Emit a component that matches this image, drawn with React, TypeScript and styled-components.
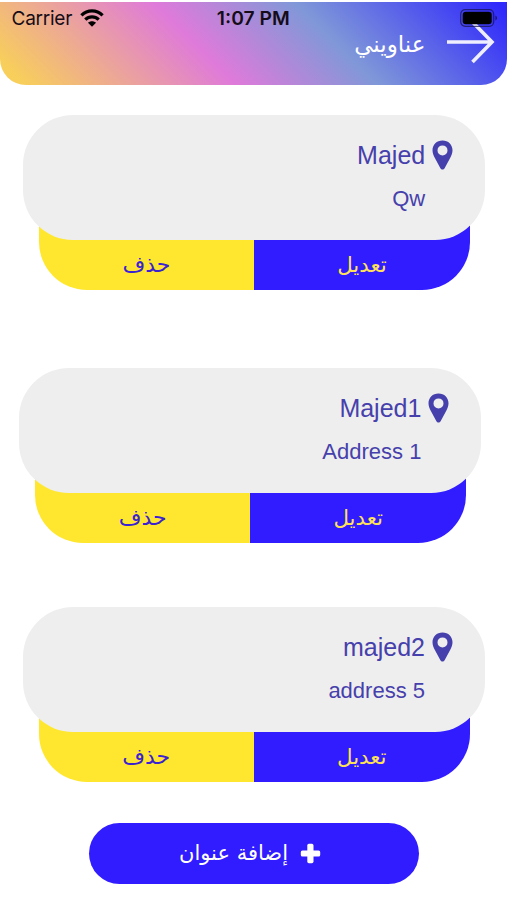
import React from "react";
import styled, { createGlobalStyle } from "styled-components";

const GlobalStyle = createGlobalStyle`
  * { box-sizing: border-box; }
  body { margin: 0; background: #fff; }
`;

const Screen = styled.main`
  width: 507px;
  height: 900px;
  overflow: hidden;
  background: #fff;
  font-family: "Liberation Sans", "DejaVu Sans", sans-serif;
`;

const Header = styled.header`
  height: 83px;
  margin-top: 1.5px;
  border-radius: 0 0 26px 26px;
  background: linear-gradient(45deg, #f8cf5a 4%, #df7ada 40%, #8098d8 64%, #3029fb 98%);
`;

const StatusBar = styled.div`
  position: relative;
  z-index: 1;
  display: grid;
  grid-template-columns: 1fr auto 1fr;
  align-items: center;
  height: 33px;
  padding: 0 9px 0 11.5px;
  font-family: Inter, sans-serif;
  color: #150c18;
`;

const Carrier = styled.div`
  display: flex;
  align-items: center;
  gap: 7.5px;
  font-size: 19px;
  letter-spacing: -0.25px;
`;

const Time = styled.span`
  margin-right: 3px;
  font-weight: 600;
  font-size: 19.3px;
`;

const Battery = styled.svg`
  justify-self: end;
  margin-top: -1px;
`;

const TitleRow = styled.div`
  direction: rtl;
  display: flex;
  align-items: center;
  gap: 20px;
  height: 44px;
  margin-top: -14.5px;
  padding-right: 12.5px;
`;

const Title = styled.h1`
  margin: 3px 0 0;
  font-family: "DejaVu Sans", sans-serif;
  font-size: 23px;
  font-weight: 400;
  color: #fff;
`;

const List = styled.section`
  display: flex;
  flex-direction: column;
  padding-top: 30.1px;
`;

const Entry = styled.article<{ $left: number; $gap: number }>`
  width: 462px;
  height: 175.5px;
  margin-left: ${(p) => p.$left}px;
  margin-bottom: ${(p) => p.$gap}px;
`;

const Card = styled.div`
  position: relative;
  z-index: 1;
  direction: rtl;
  display: grid;
  grid-template-columns: 21px 1fr;
  column-gap: 7px;
  align-content: start;
  height: 125px;
  padding: 25px 32px 0 0;
  border-radius: 50px;
  background: #eee;
  color: #4640ac;
`;

const Name = styled.div`
  height: 32px;
  font-size: 25px;
  line-height: 31px;
`;

const Address = styled.div`
  grid-column: 2;
  margin-top: 11px;
  font-size: 22px;
  line-height: 31px;
`;

const Actions = styled.div`
  display: flex;
  height: 95.5px;
  width: 431px;
  margin: -45.5px 0 0 15.5px;
  border-radius: 0 0 48px 48px;
  overflow: hidden;
`;

const Action = styled.button<{ $primary?: boolean }>`
  flex: 1;
  border: 0;
  padding: 45.5px 0 0;
  font-family: "DejaVu Sans", sans-serif;
  font-size: ${(p) => (p.$primary ? 21.3 : 22)}px;
  line-height: 50px;
  background: ${(p) => (p.$primary ? "#301cff" : "#ffe730")};
  color: ${(p) => (p.$primary ? "#ffe257" : "#3a22d0")};
`;

const AddButton = styled.button`
  direction: rtl;
  display: flex;
  align-items: center;
  gap: 12px;
  width: 330px;
  height: 61px;
  margin-left: 89px;
  padding: 0 98px 0 0;
  border: 0;
  border-radius: 31px;
  background: #301cff;
  color: #fff;
  font-family: "DejaVu Sans", sans-serif;
  font-size: 21px;
  white-space: nowrap;
`;

const entries = [
  { name: "Majed", address: "Qw", left: 23.2, gap: 77.8 },
  { name: "Majed1", address: "Address 1", left: 19.4, gap: 63.9 },
  { name: "majed2", address: "address 5", left: 23, gap: 39.8 },
];

const WifiIcon = () => (
  <svg width="24" height="18" viewBox="0 0 24 18" fill="none" stroke="#000" strokeWidth="3.2">
    <path d="M1.4 6.4C7.5.4 16.5.4 22.6 6.4" />
    <path d="M5.3 10.6c3.8-3.7 9.6-3.7 13.4 0" />
    <path d="M8 13.8c2.3-2 5.7-2 8 0l-4 4z" fill="#000" stroke="none" />
  </svg>
);

const PinIcon = () => (
  <svg width="21" height="30" viewBox="0 0 21 30">
    <path
      fill="#4640ac"
      fillRule="evenodd"
      d="M10.5.5C4.7.5.5 4.7.5 10.3c0 3 1 5 2.5 8l5.4 10c.9 1.6 3.3 1.6 4.2 0l5.4-10c1.5-3 2.5-5 2.5-8 0-5.6-4.2-9.800-10-9.800zm0 4.900a5 5 0 1 1 0 10 5 5 0 0 1 0-10z"
    />
  </svg>
);

export default function App() {
  return (
    <>
      <GlobalStyle />
      <Screen>
        <Header>
          <StatusBar>
            <Carrier>
              Carrier
              <WifiIcon />
            </Carrier>
            <Time>1:07 PM</Time>
            <Battery width="38" height="18" viewBox="0 0 38 18">
              <rect x=".7" y=".7" width="33" height="16.6" rx="4.5" fill="none" stroke="#17134f" strokeOpacity=".75" strokeWidth="1.2" />
              <rect x="2.7" y="2.7" width="29" height="12.6" rx="3" fill="#000" />
              <path d="M35.5 6.5c1.8.8 1.8 4.2 0 5z" fill="#17134f" />
            </Battery>
          </StatusBar>
          <TitleRow>
            <svg width="49" height="44" viewBox="0 0 49 44" fill="none" stroke="#eeeeff" strokeWidth="3.6">
              <path d="M1 22h45M26.5 2l19.5 20L26.5 42" />
            </svg>
            <Title>عناويني</Title>
          </TitleRow>
        </Header>
        <List>
          {entries.map((e) => (
            <Entry key={e.name} $left={e.left} $gap={e.gap}>
              <Card>
                <PinIcon />
                <Name>{e.name}</Name>
                <Address>{e.address}</Address>
              </Card>
              <Actions>
                <Action>حذف</Action>
                <Action $primary>تعديل</Action>
              </Actions>
            </Entry>
          ))}
        </List>
        <AddButton>
          <svg width="21" height="21" viewBox="0 0 21 21" fill="#fff">
            <rect x="7.3" y=".8" width="6.2" height="19.4" rx="1.6" />
            <rect x=".8" y="7.4" width="19.4" height="6.2" rx="1.6" />
          </svg>
          إضافة عنوان
        </AddButton>
      </Screen>
    </>
  );
}
